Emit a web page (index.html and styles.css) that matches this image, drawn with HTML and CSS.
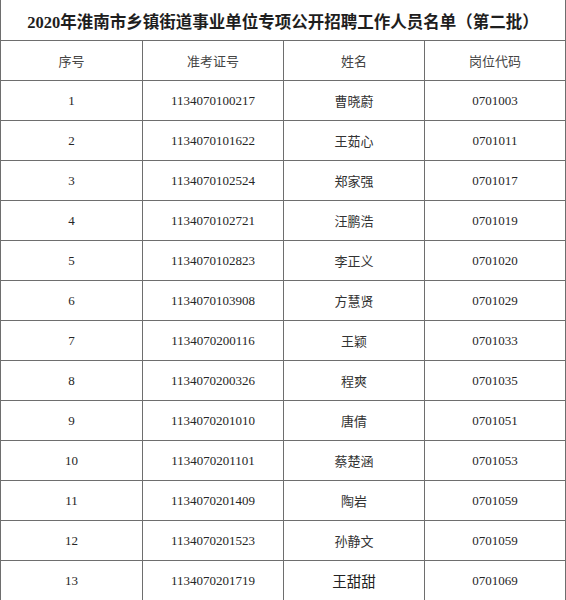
FILE: index.html
```html
<!DOCTYPE html>
<html lang="zh">
<head>
<meta charset="utf-8">
<title>名单</title>
<link rel="stylesheet" href="styles.css">
</head>
<body>
<table class="list">
  <colgroup>
    <col class="c1"><col class="c2"><col class="c3"><col class="c4">
  </colgroup>
  <thead>
    <tr class="title-row"><th colspan="4" class="title">2020年淮南市乡镇街道事业单位专项公开招聘工作人员名单（第二批）</th></tr>
    <tr class="head-row"><th>序号</th><th>准考证号</th><th>姓名</th><th>岗位代码</th></tr>
  </thead>
  <tbody>
    <tr><td class="num">1</td><td class="num">1134070100217</td><td class="name">曹晓蔚</td><td class="num">0701003</td></tr>
    <tr><td class="num">2</td><td class="num">1134070101622</td><td class="name">王茹心</td><td class="num">0701011</td></tr>
    <tr><td class="num">3</td><td class="num">1134070102524</td><td class="name">郑家强</td><td class="num">0701017</td></tr>
    <tr><td class="num">4</td><td class="num">1134070102721</td><td class="name">汪鹏浩</td><td class="num">0701019</td></tr>
    <tr><td class="num">5</td><td class="num">1134070102823</td><td class="name">李正义</td><td class="num">0701020</td></tr>
    <tr><td class="num">6</td><td class="num">1134070103908</td><td class="name">方慧贤</td><td class="num">0701029</td></tr>
    <tr><td class="num">7</td><td class="num">1134070200116</td><td class="name">王颖</td><td class="num">0701033</td></tr>
    <tr><td class="num">8</td><td class="num">1134070200326</td><td class="name">程爽</td><td class="num">0701035</td></tr>
    <tr><td class="num">9</td><td class="num">1134070201010</td><td class="name">唐倩</td><td class="num">0701051</td></tr>
    <tr><td class="num">10</td><td class="num">1134070201101</td><td class="name">蔡楚涵</td><td class="num">0701053</td></tr>
    <tr><td class="num">11</td><td class="num">1134070201409</td><td class="name">陶岩</td><td class="num">0701059</td></tr>
    <tr><td class="num">12</td><td class="num">1134070201523</td><td class="name">孙静文</td><td class="num">0701059</td></tr>
    <tr><td class="num">13</td><td class="num">1134070201719</td><td class="name name-lg">王甜甜</td><td class="num">0701069</td></tr>
  </tbody>
</table>
</body>
</html>
```
FILE: styles.css
```css
html, body {
  margin: 0;
  padding: 0;
  background: #fff;
}
.list {
  width: 565px;
  border-collapse: collapse;
  table-layout: fixed;
  font-family: "Liberation Serif", "Noto Sans CJK SC", serif;
  color: #262626;
}
.c1 { width: 142px; }
.c2 { width: 141px; }
.c3 { width: 141px; }
.c4 { width: 141px; }
.list th, .list td {
  border: 1px solid #6e6e6e;
  height: 39px;
  padding: 0;
  text-align: center;
  vertical-align: middle;
  font-weight: normal;
  font-size: 13px;
}
.title-row th.title {
  height: 38px;
  border-top: none;
  font-family: "Liberation Serif", "Noto Sans CJK SC", serif;
  font-weight: bold;
  font-size: 16.5px;
  color: #1e1e1e;
  padding-top: 2px;
}
.head-row th {
  font-family: "Noto Sans CJK SC", sans-serif;
  font-size: 13px;
  color: #444;
}
.list td.name {
  font-family: "Noto Sans CJK SC", sans-serif;
  font-size: 13px;
  color: #333;
}
.list td.name-lg {
  font-size: 14.5px;
  color: #222;
}
.list td.num {
  font-size: 13px;
}
```
